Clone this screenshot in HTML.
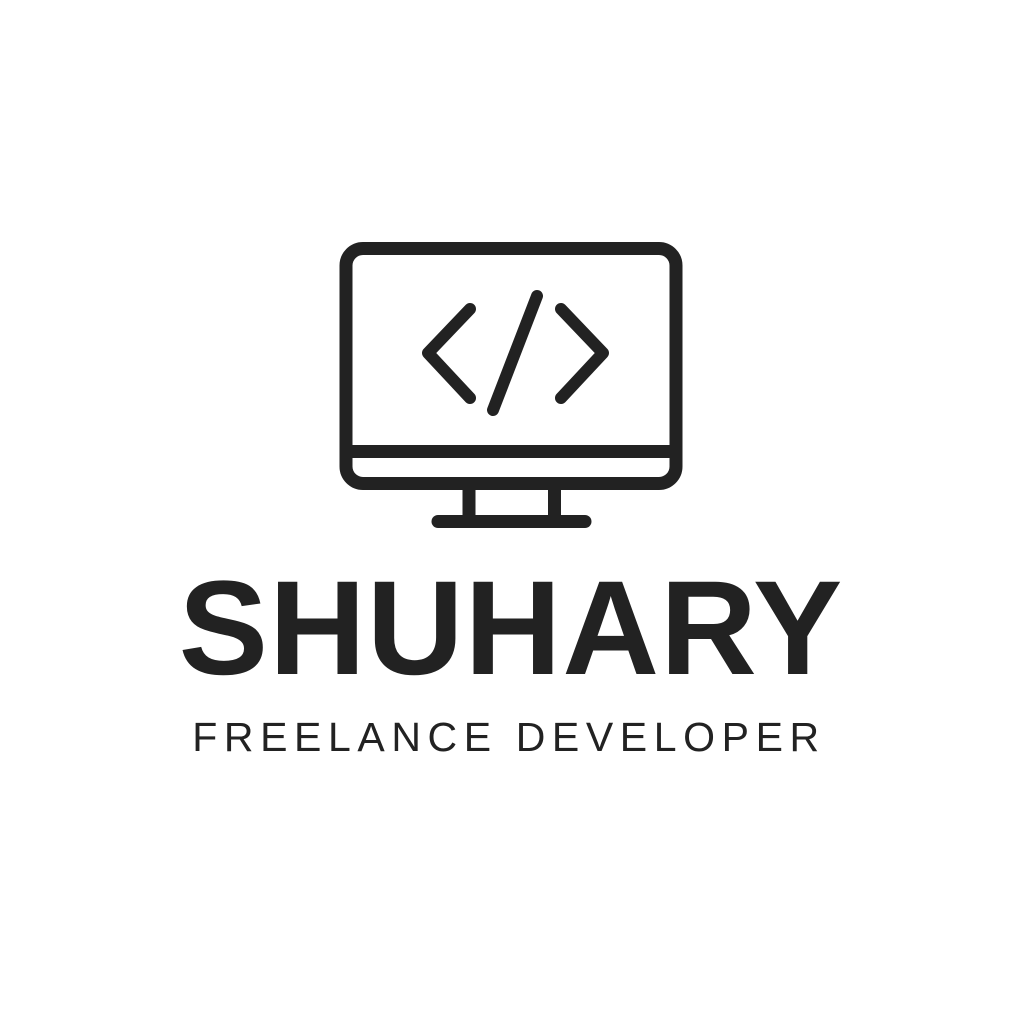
<!DOCTYPE html>
<html><head><meta charset="utf-8"><style>
html,body{margin:0;padding:0;background:#fff;width:1024px;height:1024px;overflow:hidden;position:relative}
.t{position:absolute;left:0;width:1024px;text-align:center;white-space:nowrap;font-family:"Liberation Sans",sans-serif;color:#222;line-height:1}
</style></head><body>
<svg width="1024" height="1024" style="position:absolute;left:0;top:0" fill="none" stroke="#222" stroke-linecap="round" stroke-linejoin="round">
<rect x="346" y="248.5" width="330" height="235" rx="17" stroke-width="13"/>
<line x1="346" y1="451.5" x2="676" y2="451.5" stroke-width="13"/>
<line x1="469" y1="490" x2="469" y2="515" stroke-width="13" stroke-linecap="butt"/>
<line x1="554.5" y1="490" x2="554.5" y2="515" stroke-width="13" stroke-linecap="butt"/>
<line x1="438" y1="521.5" x2="585" y2="521.5" stroke-width="13"/>
<polyline points="470,309 428,353 470,398" stroke-width="12"/>
<line x1="537" y1="296" x2="493" y2="410" stroke-width="12"/>
<polyline points="561,309 603,353 561,398" stroke-width="12"/>
</svg>
<div class="t" style="top:562px;font-size:134px;font-weight:bold;letter-spacing:1px;left:-1px">SHUHARY</div>
<div class="t" style="top:717px;font-size:41px;letter-spacing:6.6px;left:-3px">FREELANCE DEVELOPER</div>
</body></html>
